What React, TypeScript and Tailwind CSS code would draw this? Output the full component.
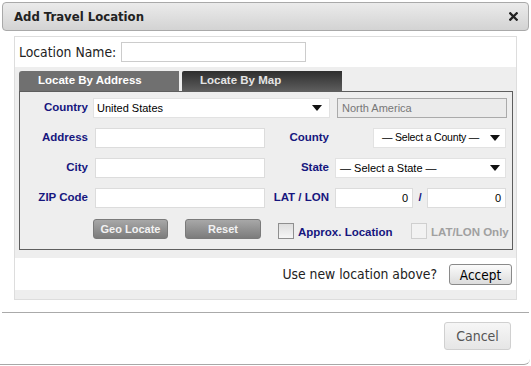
import React from 'react';

const tahoma = "font-['DejaVu_Sans_Condensed','DejaVu_Sans',sans-serif]";
const arial = "font-['Liberation_Sans',Arial,sans-serif]";

function Arrow() {
  return (
    <svg width="10" height="6" viewBox="0 0 10 6" className="shrink-0">
      <path d="M0 0 H10 L5 6 Z" fill="#111" />
    </svg>
  );
}

function Label({ w, children }: { w: string; children: React.ReactNode }) {
  return <div className={`${w} shrink-0 whitespace-nowrap text-right font-bold text-[11.5px] text-[#16167e]`}>{children}</div>;
}

function TextBox({ className = '', value = '' }: { className?: string; value?: string }) {
  return (
    <div className={`h-[20px] shrink-0 bg-white border border-[#dcdcdc] flex items-center justify-end pr-[4px] text-[11px] text-black ${className}`}>
      {value}
    </div>
  );
}

function Checkbox({ disabled }: { disabled?: boolean }) {
  return (
    <div
      className={`w-[16px] h-[16px] shrink-0 border ${disabled ? 'border-[#cfcfcf] bg-[#f2f2f2]' : 'border-[#8f8f8f] bg-gradient-to-b from-[#dedede] to-[#f6f6f6]'}`}
    />
  );
}

export default function App() {
  return (
    <div className={`w-[531px] h-[366px] bg-white overflow-hidden ${arial}`}>
      <div className="w-[530px] h-[365px] border-b border-[#a8a8a8] rounded-br-[6px] flex flex-col">
        {/* title bar */}
        <div className="ml-[2px] mt-[2px] w-[527px] h-[29px] shrink-0 rounded-[4px] border border-[#a9a9a9] bg-gradient-to-b from-[#ebebeb] to-[#d3d3d3] flex items-center justify-between pl-[11px] pr-[10px]">
          <span className={`${tahoma} font-bold text-[13px] text-[#222]`}>Add Travel Location</span>
          <svg width="9" height="9" viewBox="0 0 9 9">
            <path d="M1.3 1.3 L7.7 7.7 M7.7 1.3 L1.3 7.7" stroke="#222" strokeWidth="2.3" strokeLinecap="square" />
          </svg>
        </div>

        {/* panel */}
        <div className="ml-[14px] mt-[5px] w-[503px] h-[264px] shrink-0 border border-[#dddddd] flex flex-col">
          <div className="h-[30px] shrink-0 bg-white flex items-center pl-[4px]">
            <div className={`${tahoma} w-[102px] shrink-0 whitespace-nowrap text-[13.8px] text-[#222]`}>Location Name:</div>
            <div className="w-[185px] h-[20px] border border-[#cccccc] bg-white" />
          </div>

          <div className="bg-[#eeeeee] pt-[4px] px-[4px] pb-[8px] shrink-0">
            <div className="flex gap-[3px] h-[20px]">
              <div className="w-[160px] h-[20px] rounded-tl-[3px] bg-[#707070] text-white font-bold text-[11.5px] flex items-center pl-[19px] whitespace-nowrap">
                Locate By Address
              </div>
              <div className="w-[160px] h-[20px] rounded-tl-[2px] bg-gradient-to-b from-[#2e2e2e] to-[#5e5e5e] text-[#e4e4e4] font-bold text-[11.5px] flex items-center pl-[18px] whitespace-nowrap">
                Locate By Map
              </div>
            </div>
            <div className="w-[494px] h-[159px] border border-[#5e5e5e] bg-[#eeeeee] pt-[6px] flex flex-col gap-[10px]">
              {/* country */}
              <div className="flex items-center h-[20px]">
                <Label w="w-[68px]">Country</Label>
                <div className="ml-[5px] w-[237px] h-[20px] bg-white border border-[#e2e2e2] flex items-center pl-[3px] pr-[7px] text-[11px] text-black whitespace-nowrap">
                  <span className="flex-1">United States</span>
                  <Arrow />
                </div>
                <div className="ml-[7px] w-[170px] h-[20px] bg-[#ebebeb] border border-[#aaaaaa] flex items-center pl-[4px] text-[11px] text-[#777] whitespace-nowrap">
                  North America
                </div>
              </div>
              {/* address / county */}
              <div className="flex items-center h-[20px]">
                <Label w="w-[68px]">Address</Label>
                <TextBox className="ml-[7px] w-[170px]" />
                <Label w="w-[64px]">County</Label>
                <div className="ml-[44px] w-[133px] h-[20px] bg-white border border-[#e2e2e2] flex items-center pl-[8px] pr-[5px] text-[10.5px] tracking-[-0.2px] text-black whitespace-nowrap overflow-hidden">
                  <span>— Select a County —</span>
                  <span className="ml-auto pl-[3px]"><Arrow /></span>
                </div>
              </div>
              {/* city / state */}
              <div className="flex items-center h-[20px]">
                <Label w="w-[68px]">City</Label>
                <TextBox className="ml-[7px] w-[170px]" />
                <Label w="w-[64px]">State</Label>
                <div className="ml-[6px] w-[171px] h-[20px] bg-white border border-[#e2e2e2] flex items-center pl-[4px] pr-[5px] text-[11px] text-black whitespace-nowrap">
                  <span className="flex-1">— Select a State —</span>
                  <Arrow />
                </div>
              </div>
              {/* zip / lat lon */}
              <div className="flex items-center h-[20px]">
                <Label w="w-[68px]">ZIP Code</Label>
                <TextBox className="ml-[7px] w-[170px]" />
                <Label w="w-[64px]">LAT / LON</Label>
                <TextBox className="ml-[6px] w-[78px]" value="0" />
                <div className="w-[14px] text-center font-bold text-[11.5px] text-[#16167e]">/</div>
                <TextBox className="w-[79px]" value="0" />
              </div>
              {/* buttons */}
              <div className="flex items-center h-[20px] mt-[1px]">
                <button className="ml-[73px] w-[75px] h-[20px] shrink-0 rounded-[3px] border border-[#7a7a7a] bg-gradient-to-b from-[#a8a8a8] to-[#7c7c7c] text-[#f2f2f2] font-bold text-[11px] whitespace-nowrap">
                  Geo Locate
                </button>
                <button className="ml-[17px] w-[76px] h-[20px] shrink-0 rounded-[3px] border border-[#7a7a7a] bg-gradient-to-b from-[#a8a8a8] to-[#7c7c7c] text-[#f2f2f2] font-bold text-[11px]">
                  Reset
                </button>
                <div className="ml-[17px] mt-[4px] w-[133px] shrink-0 flex items-center">
                  <Checkbox />
                  <span className="ml-[4px] mt-[3px] font-bold text-[11.5px] text-[#16167e] whitespace-nowrap">Approx. Location</span>
                </div>
                <div className="mt-[4px] flex items-center">
                  <Checkbox disabled />
                  <span className="ml-[4px] mt-[3px] font-bold text-[11.5px] text-[#a0a0a0] whitespace-nowrap">LAT/LON Only</span>
                </div>
              </div>
            </div>
          </div>

          <div className="h-[32px] shrink-0 bg-white flex items-center justify-end pr-[4px]">
            <span className={`${tahoma} text-[13.8px] text-[#222] mr-[12px] whitespace-nowrap`}>Use new location above?</span>
            <button className={`${tahoma} w-[63px] h-[21px] rounded-[3px] border border-[#8a8a8a] bg-gradient-to-b from-[#fbfbfb] to-[#dcdcdc] text-[13.5px] text-black`}>
              Accept
            </button>
          </div>
          <div className="flex-1 bg-[#eeeeee]" />
        </div>

        {/* button pane */}
        <div className="ml-[2px] mt-[12px] w-[527px] border-t border-[#aaaaaa] pt-[9px] pr-[18px] flex justify-end">
          <button className={`${tahoma} w-[67px] h-[28px] rounded-[3px] border border-[#d0d0d0] bg-gradient-to-b from-[#f6f6f6] to-[#e6e6e6] text-[14px] text-[#555]`}>
            Cancel
          </button>
        </div>
      </div>
    </div>
  );
}
